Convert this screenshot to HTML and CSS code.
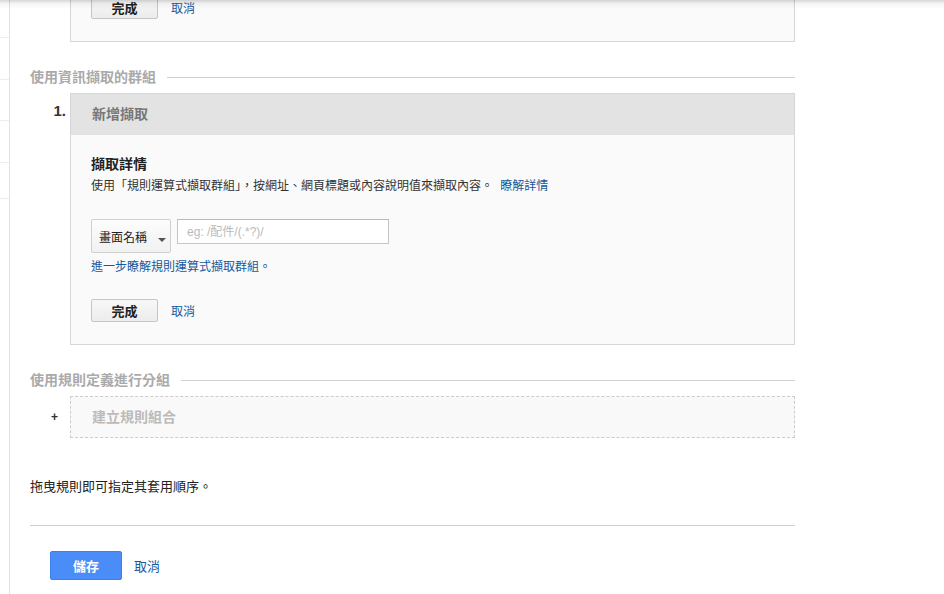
FILE: index.html
```html
<!DOCTYPE html>
<html lang="zh-Hant">

<head>
    <meta charset="UTF-8">
    <title>內容分組</title>
    <link rel="stylesheet" href="styles.css">
</head>

<body>
    <div class="top-shadow"></div>

    <div class="page">
        <!-- left nav, mostly scrolled out of view -->
        <aside class="side">
            <div class="side-row r1"></div>
            <div class="side-row r2"></div>
            <div class="side-row r3"></div>
            <div class="side-row r4"></div>
            <div class="side-row r5"></div>
        </aside>

        <main class="main">
            <!-- previous extraction (cut off at the top) -->
            <div class="group-item first">
                <span class="num"></span>
                <div class="card">
                    <div class="card-body">
                        <div class="actions">
                            <button class="btn">完成</button>
                            <a href="#" class="link">取消</a>
                        </div>
                    </div>
                </div>
            </div>

            <h3 class="section-title">使用資訊擷取的群組</h3>

            <div class="group-item">
                <span class="num">1.</span>
                <div class="card">
                    <div class="card-head">新增擷取</div>
                    <div class="card-body">
                        <h4 class="card-title">擷取詳情</h4>
                        <p class="desc">使用「規則運算式擷取群組」，按網址、網頁標題或內容說明值來擷取內容。 <a href="#" class="link learn">瞭解詳情</a></p>

                        <div class="field-row">
                            <button class="select">畫面名稱 <span class="caret"></span></button>
                            <input type="text" class="input" placeholder="eg: /配件/(.*?)/">
                        </div>
                        <a href="#" class="link more">進一步瞭解規則運算式擷取群組。</a>

                        <div class="actions">
                            <button class="btn">完成</button>
                            <a href="#" class="link">取消</a>
                        </div>
                    </div>
                </div>
            </div>

            <h3 class="section-title">使用規則定義進行分組</h3>

            <div class="group-item">
                <span class="num plus">+</span>
                <div class="add-box">建立規則組合</div>
            </div>

            <p class="hint">拖曳規則即可指定其套用順序。</p>

            <div class="footer">
                <button class="btn-primary">儲存</button>
                <a href="#" class="link cancel">取消</a>
            </div>
        </main>
    </div>
</body>

</html>
```

FILE: styles.css
```css
/* General Styles */

body {
    font-family: Arial, 'Liberation Sans', 'Noto Sans CJK TC', sans-serif;
    font-size: 12px;
    color: #222;
    margin: 0;
    padding: 0;
    background: #fff;
    overflow: hidden;
}

.top-shadow {
    position: fixed;
    left: 0;
    top: 0;
    width: 100%;
    height: 9px;
    background: linear-gradient(rgba(0, 0, 0, 0.16), rgba(0, 0, 0, 0.04) 40%, rgba(0, 0, 0, 0));
    z-index: 10;
}

.page {
    display: flex;
    height: 594px;
}

/* Side nav */

.side {
    width: 9px;
    flex-shrink: 0;
    border-right: 1px solid #e2e2e2;
}

.side-row {
    border-bottom: 1px solid #ececec;
}

.r1 { height: 37px; }
.r2 { height: 41px; }
.r3 { height: 40px; }
.r4 { height: 41px; }
.r5 { height: 35px; }

/* Main column */

.main {
    width: 765px;
    padding-left: 20px;
}

.group-item {
    display: flex;
    align-items: flex-start;
}

.group-item.first {
    margin-top: -25px;
}

.num {
    width: 36px;
    flex-shrink: 0;
    padding-right: 4px;
    text-align: right;
    font-size: 15px;
    font-weight: bold;
    color: #333;
    line-height: 20px;
    padding-top: 8px;
}

.num.plus {
    padding-right: 12px;
    width: 28px;
    font-size: 12px;
    padding-top: 11px;
    color: #333;
}

.section-title {
    display: flex;
    align-items: center;
    gap: 11px;
    margin: 25px 0 6px;
    font-size: 14px;
    line-height: 20px;
    font-weight: bold;
    color: #aaa;
}

.section-title::after {
    content: "";
    flex: 1;
    border-top: 1px solid #cfcfcf;
}

/* Cards */

.card {
    flex: 1;
    border: 1px solid #d6d6d6;
    background: #fafafa;
}

.card-head {
    height: 41px;
    line-height: 41px;
    padding-left: 21px;
    background: #e3e3e3;
    font-size: 14px;
    font-weight: bold;
    color: #777;
}

.card-body {
    padding: 19px 20px 22px;
}

.first .card-body {
    padding-top: 20px;
}

.card-title {
    margin: 0;
    font-size: 14px;
    line-height: 20px;
    font-weight: bold;
    color: #222;
}

.desc {
    margin: 3px 0 0;
    line-height: 18px;
    color: #333;
}

.link {
    color: #15589c;
    text-decoration: none;
}

.learn {
    margin-left: 4px;
}

.field-row {
    display: flex;
    align-items: flex-start;
    gap: 6px;
    margin-top: 24px;
}

.select {
    width: 80px;
    height: 34px;
    padding: 0 0 0 7px;
    text-align: left;
    border: 1px solid #d0d0d0;
    border-radius: 2px;
    background: linear-gradient(#fdfdfd, #f1f1f1);
    font-family: inherit;
    font-size: 12px;
    color: #222;
    cursor: pointer;
}

.caret {
    display: inline-block;
    margin-left: 8px;
    vertical-align: middle;
    border-left: 4px solid transparent;
    border-right: 4px solid transparent;
    border-top: 4px solid #555;
    position: relative;
    top: 2px;
}

.input {
    width: 212px;
    height: 25px;
    box-sizing: border-box;
    padding: 0 9px;
    border: 1px solid #c6c6c6;
    border-top-color: #b8b8b8;
    background: #fff;
    font-family: inherit;
    font-size: 12px;
    outline: none;
}

.input::placeholder {
    color: #bbb;
}

.more {
    display: block;
    margin-top: 5px;
    line-height: 18px;
}

.actions {
    display: flex;
    align-items: center;
    gap: 13px;
    margin-top: 23px;
}

.first .actions {
    margin-top: 0;
}

.btn {
    width: 67px;
    height: 23px;
    border: 1px solid #c6c6c6;
    border-radius: 2px;
    background: linear-gradient(#f8f8f8, #ececec);
    font-family: inherit;
    font-size: 13px;
    font-weight: bold;
    color: #222;
    padding: 0;
    cursor: pointer;
}

/* Rules */

.add-box {
    flex: 1;
    height: 40px;
    line-height: 40px;
    padding-left: 21px;
    border: 1px dashed #cccccc;
    background: #f9f9f9;
    font-size: 14px;
    font-weight: bold;
    color: #bbb;
}

.hint {
    margin: 40px 0 0;
    font-size: 13px;
    line-height: 18px;
    color: #222;
}

.footer {
    display: flex;
    align-items: center;
    gap: 12px;
    margin-top: 29px;
    padding: 25px 0 0 20px;
    border-top: 1px solid #cfcfcf;
}

.btn-primary {
    width: 72px;
    height: 29px;
    border: 1px solid #3c7ff0;
    border-radius: 2px;
    background: #4b8df8;
    color: #fff;
    font-family: inherit;
    font-size: 13px;
    font-weight: bold;
    padding: 0;
    cursor: pointer;
}

.cancel {
    font-size: 13px;
}
```
